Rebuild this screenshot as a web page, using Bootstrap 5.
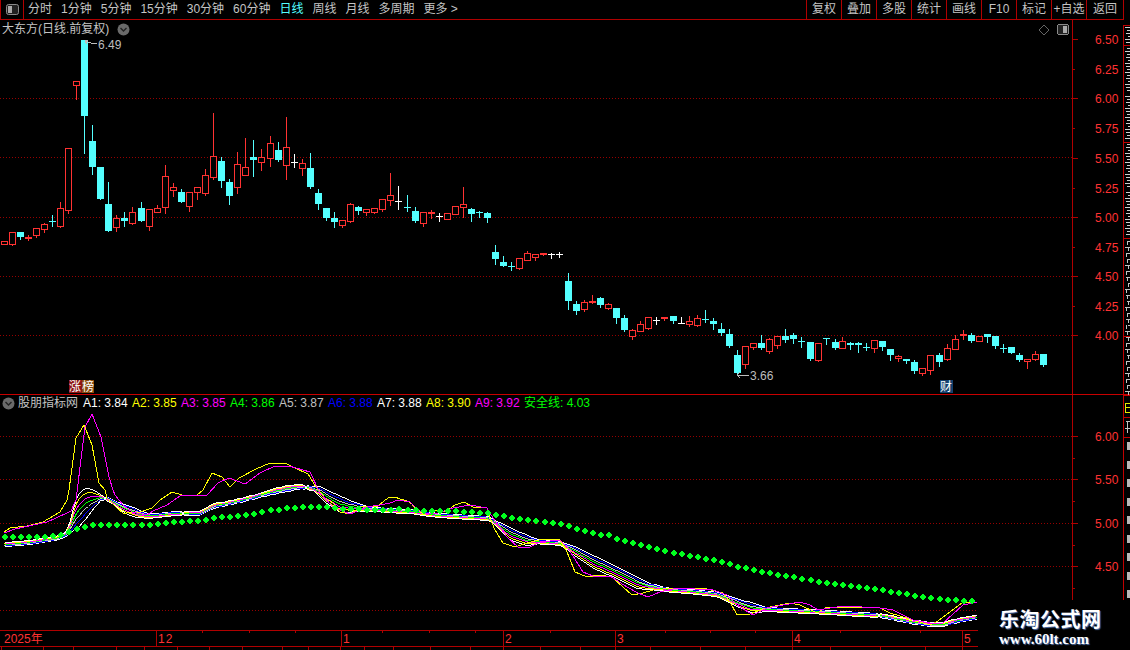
<!DOCTYPE html>
<html lang="zh-CN">
<head>
    <meta charset="UTF-8">
    <meta name="viewport" content="width=device-width, initial-scale=1.0">
    <title>大东方 日线</title>
    <link href="https://cdn.jsdelivr.net/npm/bootstrap@5.3.0/dist/css/bootstrap.min.css" rel="stylesheet">
    <style>
        html, body { height: 100%; }
        body {
            background: #000;
            color: #c4c4c4;
            overflow: hidden;
            font: 12px/19px "Liberation Sans", "Noto Sans CJK SC", sans-serif;
        }
        .app-frame { width: 1130px; height: 650px; }
        .tool-bar { width: 1124px; height: 20px; border-bottom: 1px solid #b00000; }
        .tool-icon { width: 24px; height: 19px; border-left: 1px solid #b00000; border-right: 1px solid #b00000; margin-right: 4px; }
        .tool-tabs { gap: 9px; }
        .tab-on { color: #54ffff; }
        .tool-btn { width: 35px; height: 19px; text-align: center; border-left: 1px solid #b00000; }
        .tool-btn:last-child { border-right: 1px solid #b00000; width: 38px; }
        .panel-column { width: 1123px; flex: none; }
        .chart-panel { display: block; }
        .panel-wrap { height: 375px; }
        .panel-wrap-low { height: 235px; }
        .panel-title { left: 2px; top: 0; height: 19px; }
        .panel-legend { left: 2px; top: 0; height: 16px; line-height: 16px; }
        .circle-icon { width: 13px; height: 13px; flex: none; }
        .legend-name { width: 68px; padding-left: 3px; }
        .legend-val { width: 49px; white-space: nowrap; }
        .right-strip { width: 7px; flex: none; display: block; }
        .water-mark {
            right: 0;
            bottom: 0;
            width: 152px;
            height: 50px;
            background: #000;
            color: #fff;
            padding-left: 21px;
        }
        .water-cn {
            font: 700 20px/24px "Noto Sans CJK SC", sans-serif;
            letter-spacing: .5px;
            padding-top: 7px;
            text-shadow: 1px 1px 1px #4f6fa8;
        }
        .water-url {
            font: 700 15px/17px "Liberation Serif", serif;
            text-shadow: 1px 1px 1px #4f6fa8;
        }
    </style>
</head>
<body>
    <div class="app-frame position-relative d-flex">
        <div class="panel-column">
            <div class="tool-bar d-flex justify-content-between">
                <div class="d-flex">
                    <div class="tool-icon d-flex align-items-center justify-content-center">
                        <svg width="13" height="11" viewBox="0 0 13 11"><rect x=".5" y=".5" width="12" height="10" rx="2" fill="#222" stroke="#8a8a8a"/><rect x="2" y="2" width="4" height="7" fill="#aaa"/></svg>
                    </div>
                    <div class="tool-tabs d-flex">
                        <span>分时</span><span>1分钟</span><span>5分钟</span><span>15分钟</span><span>30分钟</span><span>60分钟</span>
                        <span class="tab-on">日线</span><span>周线</span><span>月线</span><span>多周期</span><span>更多 &gt;</span>
                    </div>
                </div>
                <div class="d-flex">
                    <div class="tool-btn">复权</div><div class="tool-btn">叠加</div><div class="tool-btn">多股</div><div class="tool-btn">统计</div><div class="tool-btn">画线</div><div class="tool-btn">F10</div><div class="tool-btn">标记</div><div class="tool-btn">+自选</div><div class="tool-btn">返回</div>
                </div>
            </div>

            <div class="panel-wrap position-relative">
                <svg id="mainChart" class="chart-panel" width="1123" height="375" viewBox="0 20 1123 375"></svg>
                <div class="panel-title position-absolute d-flex align-items-center gap-2">
                    <span>大东方(日线.前复权)</span>
                    <svg class="circle-icon" viewBox="0 0 13 13"><circle cx="6.5" cy="6.5" r="6" fill="#6a6a6a"/><path d="M3.5 5l3 3 3-3" fill="none" stroke="#222" stroke-width="1.4"/></svg>
                </div>
            </div>

            <div class="panel-wrap-low position-relative">
                <svg id="lowChart" class="chart-panel" width="1123" height="235" viewBox="0 395 1123 235"></svg>
                <div class="panel-legend position-absolute d-flex align-items-center">
                    <svg class="circle-icon" viewBox="0 0 13 13"><circle cx="6.5" cy="6.5" r="6" fill="#6a6a6a"/><path d="M3.5 5l3 3 3-3" fill="none" stroke="#222" stroke-width="1.4"/></svg>
                    <span class="legend-name">股朋指标网</span>
                    <span class="legend-val" style="color:#fff">A1: 3.84</span>
                    <span class="legend-val" style="color:#ff0">A2: 3.85</span>
                    <span class="legend-val" style="color:#f0f">A3: 3.85</span>
                    <span class="legend-val" style="color:#0f0">A4: 3.86</span>
                    <span class="legend-val" style="color:#c0c0c0">A5: 3.87</span>
                    <span class="legend-val" style="color:#00f">A6: 3.88</span>
                    <span class="legend-val" style="color:#fff">A7: 3.88</span>
                    <span class="legend-val" style="color:#ff0">A8: 3.90</span>
                    <span class="legend-val" style="color:#f0f">A9: 3.92</span>
                    <span class="legend-val" style="color:#0f0">安全线: 4.03</span>
                </div>
            </div>

            <svg id="dateAxis" class="chart-panel" width="1123" height="20" viewBox="0 630 1123 20"></svg>
        </div>

        <svg id="rightStrip" class="right-strip" width="7" height="650" viewBox="1123 0 7 650"></svg>

        <div class="water-mark position-absolute">
            <div class="water-cn">乐淘公式网</div>
            <div class="water-url">www.60lt.com</div>
        </div>
    </div>

    <script src="https://cdn.jsdelivr.net/npm/bootstrap@5.3.0/dist/js/bootstrap.bundle.min.js"></script>
    <script>
        const LINE_RED = '#b00000';
        const TEXT_RED = '#ff3232';
        const CYAN = '#54ffff';

        // x, high, body top, body bottom, low, type (r hollow, R solid red, c cyan, w white)
        const candles = [
            [4,241,241,244,244,'r'],[12,232,232,244,245,'r'],[20,232,232,237,239,'c'],[28,235,237,239,240,'R'],
            [36,228,228,235,237,'r'],[44,223,224,229,232,'r'],[52,215,221,221,226,'c'],[60,202,208,226,227,'r'],
            [68,148,148,210,213,'r'],[76,81,81,85,99,'r'],[84,40,40,116,153,'c'],[92,125,141,167,174,'c'],
            [100,167,167,199,199,'c'],[108,182,204,231,231,'c'],[116,215,218,227,231,'r'],[124,212,218,221,226,'c'],
            [132,207,212,223,224,'r'],[141,202,208,221,221,'c'],[149,209,209,226,230,'r'],[157,205,208,212,212,'r'],
            [165,165,176,207,213,'r'],[173,183,187,190,196,'r'],[181,189,192,202,202,'c'],[189,192,192,206,211,'r'],
            [197,187,187,192,199,'r'],[205,169,175,193,195,'r'],[213,113,156,177,179,'r'],[221,157,161,181,187,'c'],
            [229,179,182,196,204,'c'],[237,152,164,187,193,'r'],[245,138,167,175,175,'r'],[253,140,157,160,176,'c'],
            [261,149,157,162,170,'r'],[270,136,143,158,166,'r'],[278,142,150,160,161,'c'],[286,117,147,165,179,'r'],
            [294,154,162,162,167,'w'],[302,159,163,168,175,'r'],[310,153,168,187,188,'c'],[318,189,193,204,209,'c'],
            [326,208,208,218,220,'c'],[334,212,218,222,227,'c'],[342,220,220,225,227,'r'],[350,203,204,221,222,'r'],
            [358,206,207,211,214,'c'],[366,209,209,212,215,'r'],[374,208,208,212,213,'r'],[382,199,199,209,211,'r'],
            [390,173,195,200,205,'r'],[398,186,201,201,209,'w'],[407,195,207,207,211,'c'],[415,207,211,221,222,'c'],
            [423,212,212,223,226,'r'],[431,210,212,214,218,'R'],[439,213,216,216,221,'w'],[447,213,213,219,219,'r'],
            [455,206,206,214,214,'r'],[463,187,204,207,217,'r'],[471,208,209,214,221,'c'],[479,211,212,212,217,'c'],
            [487,212,213,218,222,'c'],[495,245,252,259,264,'c'],[503,256,262,266,266,'c'],[511,262,266,266,270,'c'],
            [519,258,258,268,269,'r'],[527,251,253,260,260,'r'],[535,254,254,257,260,'r'],[543,253,253,255,255,'R'],
            [551,253,254,254,258,'w'],[559,252,254,254,257,'w'],[568,273,281,301,309,'c'],[576,301,304,311,314,'c'],
            [584,300,302,309,311,'r'],[592,295,301,303,303,'R'],[600,297,298,305,307,'c'],[608,303,304,308,309,'r'],
            [616,308,308,318,323,'c'],[624,315,318,330,331,'c'],[632,329,330,336,339,'r'],[640,321,324,331,331,'r'],
            [648,317,317,328,329,'r'],[656,317,320,320,324,'w'],[664,317,317,319,320,'R'],[673,316,316,321,323,'c'],
            [681,317,323,323,323,'w'],[689,316,321,324,326,'r'],[697,315,318,325,326,'r'],[705,310,319,319,322,'c'],
            [713,318,321,324,329,'c'],[721,323,329,333,335,'c'],[729,329,334,346,347,'c'],[737,350,355,373,373,'c'],
            [745,346,346,364,368,'r'],[753,343,343,347,349,'r'],[761,335,343,348,349,'c'],[769,338,339,351,353,'r'],
            [777,336,336,345,348,'r'],[785,329,336,340,342,'c'],[793,333,335,339,343,'c'],[801,337,341,341,347,'c'],
            [810,342,342,359,360,'c'],[818,343,343,360,361,'r'],[826,338,338,339,344,'c'],[835,339,342,348,349,'c'],
            [842,337,341,348,348,'r'],[850,342,343,345,349,'c'],[858,342,343,345,352,'c'],[866,343,347,347,350,'c'],
            [874,340,340,348,352,'r'],[882,341,341,347,350,'c'],[890,349,349,355,360,'c'],[898,355,356,358,361,'r'],
            [906,359,359,361,363,'c'],[914,360,362,371,373,'c'],[922,368,368,373,375,'r'],[930,355,355,370,374,'r'],
            [939,353,355,362,366,'c'],[947,344,348,359,360,'r'],[955,335,339,349,349,'r'],[963,330,334,336,339,'R'],
            [971,333,335,341,342,'c'],[979,336,336,341,341,'r'],[987,334,334,337,342,'c'],[995,336,336,346,348,'c'],
            [1003,344,348,348,352,'c'],[1011,347,347,353,353,'c'],[1019,353,355,360,361,'c'],[1027,359,359,361,368,'r'],
            [1035,351,354,359,360,'r'],[1043,354,354,365,366,'c']
        ];

        const lineYellow = [[4,532],[10,528],[27,526],[43,522],[60,512],[67,500],[69,490],[76,438],[84,425],[92,445],[99,483],[105,490],[107,498],[117,508],[123,513],[127,513],[140,512],[152,508],[160,500],[172,492],[182,495],[197,495],[203,490],[212,473],[222,477],[230,487],[239,478],[256,469],[270,463],[285,463],[295,468],[308,474],[316,487],[325,498],[333,503],[340,512],[350,514],[363,506],[377,507],[385,500],[390,497],[395,497],[400,499],[407,501],[412,504],[415,508],[422,513],[430,513],[438,510],[443,512],[448,510],[455,505],[464,502],[473,507],[487,508],[490,518],[495,530],[503,543],[515,547],[527,543],[543,539],[560,540],[567,552],[575,572],[587,577],[600,575],[612,577],[623,587],[632,595],[643,593],[653,590],[673,588],[703,588],[723,593],[730,602],[737,615],[750,614],[760,610],[770,607],[790,603],[800,605],[817,613],[827,607],[860,607],[880,608],[890,613],[913,620],[930,625],[938,621],[962,603],[977,602]];
        const lineMagenta = [[4,533],[15,529],[33,525],[47,522],[67,513],[71,511],[76,500],[85,427],[92,414],[101,437],[109,477],[113,490],[115,495],[123,505],[132,512],[147,515],[153,511],[167,505],[180,496],[207,495],[218,483],[229,478],[245,484],[260,473],[275,466],[289,466],[310,472],[320,493],[333,507],[350,514],[367,507],[380,505],[390,503],[398,500],[410,502],[418,510],[425,513],[438,513],[453,508],[470,505],[487,508],[493,518],[507,537],[518,547],[530,547],[540,542],[560,540],[568,548],[583,572],[593,576],[610,576],[627,587],[638,593],[648,597],[660,592],[677,588],[713,590],[727,595],[737,605],[753,615],[767,608],[800,602],[810,605],[818,610],[843,606],[880,608],[893,610],[913,620],[930,623],[943,623],[963,605],[977,602]];
        // ribbon A1..A7 is drawn between a fast and a slow curve
        const fastLine = [[4,543],[30,541],[40,539],[55,537],[65,533],[70,520],[75,500],[80,491],[86,487],[92,489],[98,493],[107,499],[117,507],[125,513],[137,517],[150,518],[167,514],[200,512],[213,503],[233,500],[253,495],[270,489],[287,485],[300,484],[313,490],[325,502],[340,512],[360,511],[380,510],[413,512],[437,517],[463,518],[488,518],[497,527],[510,540],[527,545],[540,543],[560,544],[570,552],[593,568],[617,578],[637,588],[660,590],[687,593],[717,596],[730,603],[750,612],[773,611],[800,612],[827,614],[860,616],[880,615],[897,618],[913,621],[930,623],[943,623],[957,619],[977,616]];
        const slowLine = [[4,545],[30,543],[55,539],[67,535],[80,525],[90,512],[100,500],[107,498],[113,500],[133,507],[143,512],[157,514],[173,513],[200,513],[217,507],[233,503],[253,498],[287,491],[305,487],[320,486],[327,490],[345,498],[363,505],[380,509],[413,511],[437,513],[463,515],[488,518],[500,522],[520,532],[540,540],[560,542],[573,545],[593,555],[620,568],[647,582],[667,588],[693,589],[717,592],[743,600],[767,607],[793,609],[827,610],[860,612],[880,615],[913,622],[930,625],[943,625],[957,621],[977,617]];
        const ribbonColors = ['#fff', '#ff0', '#f0f', '#0f0', '#c0c0c0', '#00f', '#fff'];

        const safeDots = [[4,537],[12,537],[20,537],[28,537],[36,537],[44,537],[52,536],[60,535],[68,532],[76,529],[84,527],[92,525],[100,525],[108,525],[116,525],[124,525],[132,525],[141,525],[149,525],[157,524],[165,523],[173,522],[181,522],[189,521],[197,521],[205,520],[213,518],[221,517],[229,517],[237,516],[245,515],[253,514],[261,512],[270,510],[278,510],[286,508],[294,508],[302,507],[310,507],[318,507],[326,507],[334,508],[342,509],[350,509],[358,509],[366,510],[374,510],[382,510],[390,510],[398,509],[407,510],[415,510],[423,511],[431,511],[439,511],[447,511],[455,511],[463,512],[471,512],[479,513],[487,513],[495,515],[503,516],[511,518],[519,519],[527,520],[535,521],[544,522],[552,523],[560,524],[568,526],[576,529],[584,531],[592,533],[600,535],[608,535],[616,539],[624,541],[632,543],[640,545],[648,547],[656,549],[664,551],[673,553],[681,554],[689,556],[697,557],[705,559],[713,560],[721,562],[729,564],[737,567],[745,568],[753,570],[761,572],[769,573],[777,575],[785,576],[793,577],[801,579],[810,580],[818,582],[826,583],[834,584],[842,585],[850,586],[858,587],[866,588],[874,589],[882,590],[890,592],[898,593],[906,594],[914,596],[922,597],[930,598],[939,599],[947,600],[955,600],[963,601],[971,601]];

        function box(x, y, w, h, fill) {
            return `<rect x="${x}" y="${y}" width="${w}" height="${h}" fill="${fill}"/>`;
        }

        function label(x, y, text, fill, extra) {
            return `<text x="${x}" y="${y}" fill="${fill}" font-family="Liberation Sans, Noto Sans CJK SC, sans-serif" font-size="12" ${extra || ''}>${text}</text>`;
        }

        function dotted(y) {
            return `<line x1="0" x2="1072" y1="${y + .5}" y2="${y + .5}" stroke="#960000" stroke-dasharray="1 2"/>`;
        }

        function candleSvg(c) {
            const [x, high, top, bottom, low, type] = c;
            const color = { r: TEXT_RED, R: TEXT_RED, c: CYAN, w: '#fff' }[type];
            let out = box(x, high, 1, low - high + 1, color);
            if (type === 'r') {
                out += `<rect x="${x - 2.5}" y="${top + .5}" width="6" height="${Math.max(bottom - top, 2)}" fill="#000" stroke="${color}"/>`;
            } else if (top === bottom) {
                out += box(x - 3, top, 7, 1, color);
            } else {
                out += box(x - 3, top, 7, bottom - top, color);
            }
            return out;
        }

        function axisLabels(list) {
            return list.map(([y, text, major]) =>
                box(1072, y, major ? 6 : 3, 1, LINE_RED) + (text ? label(1095, y + 5, text, TEXT_RED) : '')
            ).join('');
        }

        function drawMain() {
            let s = '';
            [98, 157, 217, 276, 335].forEach(y => { s += dotted(y); });
            s += candles.map(candleSvg).join('');

            // high and low price marks
            s += `<path d="M88 40l-3 1 2 3M85 41l6 2 6 1" fill="none" stroke="#bdbdbd" stroke-width="1"/>`;
            s += label(98, 49, '6.49', '#bdbdbd');
            s += `<path d="M740 372l-3 3 3 3M737 375h12" fill="none" stroke="#bdbdbd" stroke-width="1"/>`;
            s += label(750, 380, '3.66', '#bdbdbd');

            // right side icons
            s += `<path d="M1044 25l5 5-5 5-5-5z" fill="none" stroke="#666"/>`;
            s += `<rect x="1057.5" y="24.5" width="11" height="10" rx="2" fill="#222" stroke="#8a8a8a"/>` + box(1063, 26, 4, 7, '#aaa');

            // badges under the candles
            s += box(69, 380, 13, 13, '#8c1414') + box(82, 380, 12, 13, '#8a4a0c');
            s += label(69, 391, '涨', '#fff') + label(82, 391, '榜', '#fff');
            s += box(940, 380, 13, 13, '#14406e') + label(940, 391, '财', '#fff');

            s += box(1072, 20, 1, 375, LINE_RED);
            s += axisLabels([[39,'6.50',1],[69,'6.25',0],[98,'6.00',1],[128,'5.75',0],[158,'5.50',1],[188,'5.25',0],[217,'5.00',1],[247,'4.75',0],[276,'4.50',1],[306,'4.25',0],[335,'4.00',1]]);
            s += box(0, 394, 1123, 1, '#c80000');
            document.getElementById('mainChart').innerHTML = `<g shape-rendering="crispEdges">${s}</g>`;
        }

        function yAt(line, x) {
            for (let i = 1; i < line.length; i++) {
                if (x <= line[i][0]) {
                    const [x0, y0] = line[i - 1];
                    const [x1, y1] = line[i];
                    return y0 + (y1 - y0) * (x - x0) / (x1 - x0);
                }
            }
            return line[line.length - 1][1];
        }

        function polyline(points, color) {
            const d = points.map(p => p[0] + ',' + p[1]).join(' ');
            return `<polyline points="${d}" fill="none" stroke="${color}" stroke-width="1"/>`;
        }

        function drawLow() {
            let s = '';
            [436, 479, 523, 566, 610].forEach(y => { s += dotted(y); });

            // slow lines first so that the fast ones lie on top
            const last = ribbonColors.length - 1;
            for (let n = last; n >= 0; n--) {
                const pts = [];
                for (let x = 4; x <= 977; x += 3) {
                    const fast = yAt(fastLine, x);
                    const slow = yAt(slowLine, x);
                    const dir = slow >= fast ? 1 : -1;
                    // keep the band at least 4px thick where the lines nearly meet
                    const spread = Math.max(Math.abs(slow - fast), 4);
                    const y = (fast + slow) / 2 + dir * spread * (n / last - .5);
                    pts.push([x + .5, Math.round(y) + .5]);
                }
                s += polyline(pts, ribbonColors[n]);
            }
            s += polyline(lineYellow, '#ff0') + polyline(lineMagenta, '#f0f');

            s += safeDots.map(([x, y]) =>
                `<path d="M${x} ${y - 3}h1l2.5 2.5v1l-2.5 2.5h-1l-2.5-2.5v-1z" fill="#00ff1e"/>`
            ).join('');

            s += box(1072, 395, 1, 235, LINE_RED);
            s += axisLabels([[436,'6.00',1],[458,'',0],[479,'5.50',1],[501,'',0],[523,'5.00',1],[545,'',0],[566,'4.50',1],[588,'',0]]);
            document.getElementById('lowChart').innerHTML = `<g shape-rendering="crispEdges">${s}</g>`;
        }

        function drawDates() {
            let s = box(0, 630, 1123, 1, LINE_RED) + box(0, 646, 1123, 1, LINE_RED);
            s += label(4, 643, '2025年', TEXT_RED);
            s += label(158, 643, '12', TEXT_RED, 'letter-spacing="1"');
            [[343,'1'],[505,'2'],[617,'3'],[794,'4'],[964,'5']].forEach(([x, t]) => {
                s += label(x, 643, t, TEXT_RED);
            });
            [156, 341, 503, 615, 792, 962].forEach(x => { s += box(x, 630, 1, 16, LINE_RED); });
            [202, 249, 295, 382, 429, 475, 550, 665, 710, 755, 840, 920].forEach(x => { s += box(x, 631, 1, 2, LINE_RED); });
            [1, 43, 73, 116, 144, 177, 209, 242, 282, 308, 340, 364, 393, 430, 470, 503, 540, 580, 615, 650, 700, 745, 792, 830, 880, 925, 962].forEach(x => {
                s += box(x, 647, 1, 3, LINE_RED);
            });
            document.getElementById('dateAxis').innerHTML = `<g shape-rendering="crispEdges">${s}</g>`;
        }

        // the clipped edge of the next column: frame lines and stroke fragments
        function drawStrip() {
            let s = box(1123, 25, 1, 370, '#c00000') + box(1122, 395, 2, 205, '#c00000');
            [25, 45, 142, 238, 336].forEach(y => { s += box(1123, y, 7, 1, '#c00000'); });
            s += box(1123, 394, 7, 2, '#c80000');
            [417, 437].forEach(y => { s += box(1123, y, 7, 1, '#c00000'); });

            // dense number rows
            const widths = [5, 3, 4, 2, 5, 4, 3];
            let n = 0;
            for (let y = 27; y < 238; y += 3) {
                if (y % 48 > 44 || y === 45) continue;
                const w = widths[n++ % widths.length];
                s += box(1130 - w, y, w, 1, '#cfcfcf');
            }
            // larger pieces of text further down
            for (let y = 241; y < 392; y += 6) {
                const w = widths[n++ % widths.length];
                s += box(1130 - w, y, w, 1, '#c4c4c4') + box(1126 + n % 3, y, 1, 4, '#c4c4c4');
            }
            s += box(1125, 403, 5, 1, '#e8e800') + box(1125, 412, 5, 1, '#e8e800') + box(1125, 403, 1, 9, '#e8e800') + box(1125, 407, 5, 1, '#e8e800');
            s += box(1126, 421, 4, 1, '#c4c4c4') + box(1127, 421, 1, 12, '#c4c4c4') + box(1125, 428, 5, 1, '#c4c4c4');
            for (let y = 442; y < 600; y += 18.5) {
                s += box(1127, Math.round(y), 3, 8, '#b8b8b8');
            }
            document.getElementById('rightStrip').innerHTML = `<g shape-rendering="crispEdges">${s}</g>`;
        }

        drawMain();
        drawLow();
        drawDates();
        drawStrip();
    </script>
</body>
</html>
